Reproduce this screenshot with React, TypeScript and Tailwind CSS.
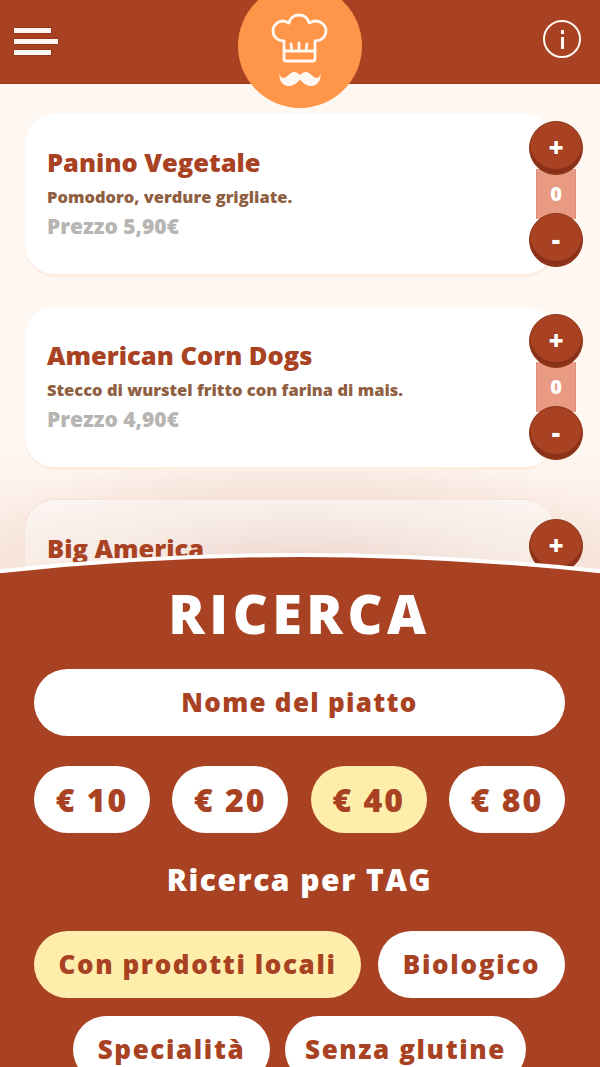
import React from 'react';

const FONT = "font-['Open_Sans',sans-serif]";

type Dish = { name: string; description?: string; price?: string; faded?: boolean };

const dishes: Dish[] = [
  { name: 'Panino Vegetale', description: 'Pomodoro, verdure grigliate.', price: 'Prezzo 5,90€' },
  { name: 'American Corn Dogs', description: 'Stecco di wurstel fritto con farina di mais.', price: 'Prezzo 4,90€' },
  { name: 'Big America', faded: true },
];

function ChefLogo() {
  return (
    <div className="absolute left-[238px] top-[-16px] w-[124px] h-[124px] rounded-full bg-[#ff9549] flex flex-col items-center justify-end pb-[21px] gap-[8px]">
      <svg width="60" height="50" viewBox="0 0 60 50" fill="none" stroke="#fff8f2" strokeWidth="2.8" strokeLinejoin="round" strokeLinecap="round">
        <path d="M14 28 C7 28 3 23 3 18 C3 12 8 8 13 8 C15 8 17 9 19 10 C20 5 24 2 29 2 C34 2 38 5 39 10 C41 9 43 8 45 8 C51 8 56 12 56 18 C56 23 52 28 45 28 L45 46 Q45 48 43 48 L16 48 Q14 48 14 46 Z" />
        <path d="M14 38 H45 M21 31 L22 38 M29 30 V38 M37 31 L36 38" />
      </svg>
      <svg width="42" height="16" viewBox="0 0 42 16" fill="#fff8f2">
        <path d="M21 4 C18 1 15 0 12 2 C9 4 7 7 4 7 C2.5 7 1 5 0.5 3 C0 8 2 14 9 15 C14 15.5 18 12 21 8.5 C24 12 28 15.5 33 15 C40 14 42 8 41.5 3 C41 5 39.5 7 38 7 C35 7 33 4 30 2 C27 0 24 1 21 4 Z" />
      </svg>
    </div>
  );
}

function Header() {
  return (
    <header className="relative z-10 h-[84px] bg-[#a84222] border-b border-[#9a3a1c] flex items-center justify-between pl-[14px] pr-[19px]">
      <div className="flex flex-col gap-[6px] mt-[-1px]">
        <span className="block w-[37px] h-[5px] bg-[#fff8f2] shadow-[0_0_0_1px_#97351a]" />
        <span className="block w-[44px] h-[5px] bg-[#fff8f2] shadow-[0_0_0_1px_#97351a]" />
        <span className="block w-[37px] h-[5px] bg-[#fff8f2] shadow-[0_0_0_1px_#97351a]" />
      </div>
      <ChefLogo />
      <div className="w-[38px] h-[38px] mt-[-5px] rounded-full border-[2.5px] border-[#fff8f2] flex flex-col items-center justify-center gap-[3px]">
        <span className="block w-[3px] h-[4px] bg-[#fff8f2]" />
        <span className="block w-[3px] h-[12px] bg-[#fff8f2]" />
      </div>
    </header>
  );
}

function RoundButton({ label }: { label: string }) {
  return (
    <div className={`relative z-10 w-[54px] h-[54px] pb-[3px] rounded-full bg-[#a84222] border border-[#8f3519] shadow-[inset_0_-5px_0_#8a3219] flex items-center justify-center text-white text-[26px] font-extrabold leading-none ${FONT}`}>
      {label}
    </div>
  );
}

function DishCard({ dish }: { dish: Dish }) {
  return (
    <div className={`relative h-[160px] rounded-[30px] pl-[22px] pt-[30px] ${dish.faded ? 'bg-gradient-to-b from-white/50 to-white/10 shadow-[0_0_0_1px_#f6e2d6]' : 'bg-white shadow-[0_3px_0_#fdeee4]'}`}>
      <h2 className={`text-[25.5px] leading-[36px] font-extrabold text-[#a84222] ${FONT}`}>{dish.name}</h2>
      {dish.description && (
        <p className={`mt-[5px] text-[16.5px] leading-[24px] font-extrabold text-[#8f5f42] ${FONT}`}>{dish.description}</p>
      )}
      {dish.price && (
        <p className={`text-[21px] leading-[34px] font-extrabold text-[#b7b5b3] ${FONT}`}>{dish.price}</p>
      )}
      <div className={`absolute right-[-28px] w-[54px] flex flex-col items-center ${dish.faded ? 'top-[19px]' : 'top-[7px]'}`}>
        <RoundButton label="+" />
        <div className={`w-[40px] h-[50px] my-[-6px] bg-[#e89a83] border-x border-[#dc8f78] flex items-center justify-center text-white text-[20px] font-extrabold ${FONT}`}>
          0
        </div>
        <RoundButton label="-" />
      </div>
    </div>
  );
}

function Pill({ label, active, className }: { label: string; active?: boolean; className: string }) {
  return (
    <div className={`h-[67px] rounded-full flex items-center justify-center text-[#a84222] font-extrabold ${active ? 'bg-[#ffedab]' : 'bg-white'} ${FONT} ${className}`}>
      {label}
    </div>
  );
}

function SearchPanel() {
  return (
    <section className="absolute left-0 right-0 top-[553px] bottom-0 z-20">
      <svg className="absolute left-0 top-0" width="600" height="24" viewBox="0 0 600 24">
        <path d="M-20 20.5 Q300 -16.5 620 20.5 V30 H-20 Z" fill="#a84222" stroke="#fff" strokeWidth="4" />
      </svg>
      <div className="absolute left-0 right-0 top-[22px] bottom-0 bg-[#a84222]" />
      <div className="relative pt-[28px] pl-[34px] pr-[35px] flex flex-col items-center">
        <h1 className={`text-[54px] leading-[64px] font-extrabold tracking-[4.5px] text-white ${FONT}`}>RICERCA</h1>
        <Pill label="Nome del piatto" className="w-full mt-[24px] text-[26px] tracking-[1.3px]" />
        <div className="w-full mt-[30px] flex justify-between">
          <Pill label="€ 10" className="w-[116px] text-[32px] tracking-[2px]" />
          <Pill label="€ 20" className="w-[116px] text-[32px] tracking-[2px]" />
          <Pill label="€ 40" active className="w-[116px] text-[32px] tracking-[2px]" />
          <Pill label="€ 80" className="w-[116px] text-[32px] tracking-[2px]" />
        </div>
        <h3 className={`mt-[27px] text-[30px] leading-[40px] font-extrabold tracking-[1.5px] text-white ${FONT}`}>Ricerca per TAG</h3>
        <div className="w-full mt-[31px] flex justify-between">
          <Pill label="Con prodotti locali" active className="w-[327px] text-[26px] tracking-[1.6px]" />
          <Pill label="Biologico" className="w-[187px] text-[26px] tracking-[1.7px]" />
        </div>
        <div className="mt-[18px] flex justify-center gap-[15px]">
          <Pill label="Specialità" className="w-[197px] text-[26px] tracking-[1.6px]" />
          <Pill label="Senza glutine" className="w-[241px] text-[26px] tracking-[1.6px]" />
        </div>
      </div>
    </section>
  );
}

export default function App() {
  return (
    <div className="relative w-[600px] h-[1067px] overflow-hidden bg-[#fff7f2]">
      <Header />
      {/* soft shadow the panel throws on the list, below the cards */}
      <div className="absolute left-0 right-0 top-[450px] h-[125px] bg-gradient-to-b from-transparent to-[#f8e6dc]" />
      <div className="absolute left-0 right-0 top-[450px] h-[125px] bg-[radial-gradient(ellipse_62%_100%_at_50%_100%,#e0bcae_0%,#f3dfd5_55%,transparent_100%)]" />
      <main className="relative pl-[25px] pr-[45px] pt-[30px] flex flex-col gap-[33px]">
        {dishes.map((dish) => (
          <DishCard key={dish.name} dish={dish} />
        ))}
      </main>
      <SearchPanel />
    </div>
  );
}
